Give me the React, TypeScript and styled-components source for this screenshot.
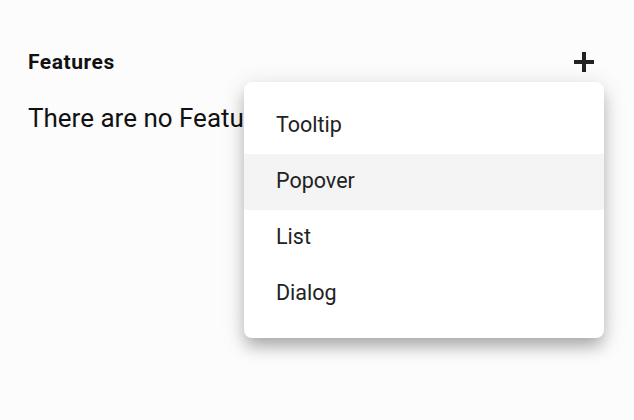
import React from "react";
import styled, { createGlobalStyle } from "styled-components";

const Global = createGlobalStyle`
  html, body { margin: 0; padding: 0; background: #fcfcfc; }
  body { font-family: Roboto, "Liberation Sans", sans-serif; color: #111; }
`;

const Page = styled.div`
  padding: 42px 30px 0 28px;
  height: 420px;
  box-sizing: border-box;
`;

const Header = styled.div`
  display: flex;
  align-items: center;
  justify-content: space-between;
  height: 40px;
`;

const Title = styled.h2`
  margin: 0;
  font-size: 21px;
  font-weight: 700;
  letter-spacing: 0.55px;
  color: #111;
`;

const Anchor = styled.div`
  position: relative;
`;

const IconButton = styled.button`
  width: 40px;
  height: 40px;
  border: 0;
  padding: 0;
  background: transparent;
  display: flex;
  align-items: center;
  justify-content: center;
  color: #222;
`;

const Empty = styled.p`
  margin: 21px 0 0;
  font-size: 26px;
  line-height: 30px;
  color: #111;
`;

const Menu = styled.ul`
  position: absolute;
  top: 100%;
  right: 0;
  width: 360px;
  margin: 0;
  padding: 16px 0;
  list-style: none;
  background: #fff;
  border-radius: 8px;
  box-shadow: 0 10px 16px -2px rgba(0, 0, 0, 0.28), 0 4px 24px 2px rgba(0, 0, 0, 0.1);
  z-index: 10;
`;

const Item = styled.li<{ $active?: boolean }>`
  height: 56px;
  display: flex;
  align-items: center;
  padding: 0 32px 3px;
  box-sizing: border-box;
  font-size: 21.5px;
  color: #222;
  background: ${(p) => (p.$active ? "#f4f4f4" : "transparent")};
`;

const PlusIcon = () => (
  <svg width="20" height="20" viewBox="0 0 20 20" fill="currentColor">
    <rect x="8" y="0" width="4" height="20" />
    <rect x="0" y="8" width="20" height="4" />
  </svg>
);

const items = ["Tooltip", "Popover", "List", "Dialog"];

export default function App() {
  return (
    <>
      <Global />
      <Page>
        <Header>
          <Title>Features</Title>
          <Anchor>
            <IconButton aria-label="Add">
              <PlusIcon />
            </IconButton>
            <Menu>
              {items.map((it) => (
                <Item key={it} $active={it === "Popover"}>
                  {it}
                </Item>
              ))}
            </Menu>
          </Anchor>
        </Header>
        <Empty>There are no Features</Empty>
      </Page>
    </>
  );
}
